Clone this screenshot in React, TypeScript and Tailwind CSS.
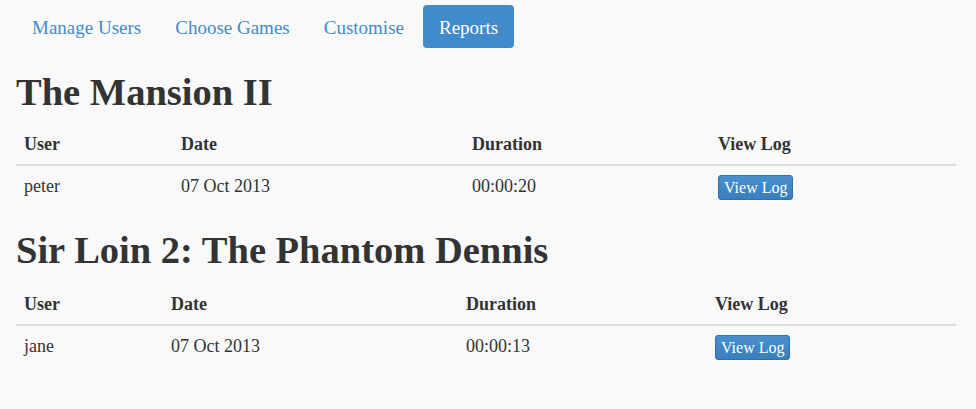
import React from 'react';

type Row = { user: string; date: string; duration: string };

type Report = {
  title: string;
  widths: string[];
  tableGap: string;
  rows: Row[];
};

const reports: Report[] = [
  {
    title: 'The Mansion II',
    widths: ['w-[157px]', 'w-[291px]', 'w-[246px]', 'w-[246px]'],
    tableGap: 'mt-[11px]',
    rows: [{ user: 'peter', date: '07 Oct 2013', duration: '00:00:20' }],
  },
  {
    title: 'Sir Loin 2: The Phantom Dennis',
    widths: ['w-[147px]', 'w-[295px]', 'w-[249px]', 'w-[249px]'],
    tableGap: 'mt-[13px]',
    rows: [{ user: 'jane', date: '07 Oct 2013', duration: '00:00:13' }],
  },
];

const tabs = ['Manage Users', 'Choose Games', 'Customise', 'Reports'];

const App = () => {
  return (
    <div className="min-h-[409px] bg-[#f9f9f9] text-[#333] font-['Liberation_Serif',_'Times_New_Roman',_serif]">
      <div className="px-4 w-[972px]">
        {/* Nav pills */}
        <ul className="flex gap-1 pt-[5px] pl-px">
          {tabs.map((tab) => (
            <li key={tab}>
              <a
                className={
                  tab === 'Reports'
                    ? 'flex items-center h-[43px] pt-[3px] px-[16px] rounded-[4px] bg-[#428bca] text-white text-[19px]'
                    : 'flex items-center h-[43px] pt-[3px] px-[15px] rounded-[4px] text-[#428bca] text-[19px]'
                }
              >
                {tab}
              </a>
            </li>
          ))}
        </ul>

        {reports.map((report) => (
          <section key={report.title}>
            <h1 className="mt-[23px] text-[38.5px] leading-[42px] font-bold">{report.title}</h1>
            <table className={`${report.tableGap} w-[940px] table-fixed border-collapse text-[18px] leading-[24px]`}>
              <colgroup>
                {report.widths.map((w, i) => (
                  <col key={i} className={w} />
                ))}
              </colgroup>
              <thead>
                <tr className="border-b-2 border-[#ddd]">
                  <th className="p-2 text-left font-bold">User</th>
                  <th className="p-2 text-left font-bold">Date</th>
                  <th className="p-2 text-left font-bold">Duration</th>
                  <th className="p-2 text-left font-bold">View Log</th>
                </tr>
              </thead>
              <tbody>
                {report.rows.map((row) => (
                  <tr key={row.user}>
                    <td className="p-2 align-top">{row.user}</td>
                    <td className="p-2 align-top">{row.date}</td>
                    <td className="p-2 align-top">{row.duration}</td>
                    <td className="px-2 pt-[9px] pb-[6px] align-top">
                      <button className="h-[25px] px-[5px] rounded-[3px] border border-[#3071a9] bg-gradient-to-b from-[#4790cf] to-[#3a7ebd] text-white text-[16px] leading-[23px]">
                        View Log
                      </button>
                    </td>
                  </tr>
                ))}
              </tbody>
            </table>
          </section>
        ))}
      </div>
    </div>
  );
};

export default App;
